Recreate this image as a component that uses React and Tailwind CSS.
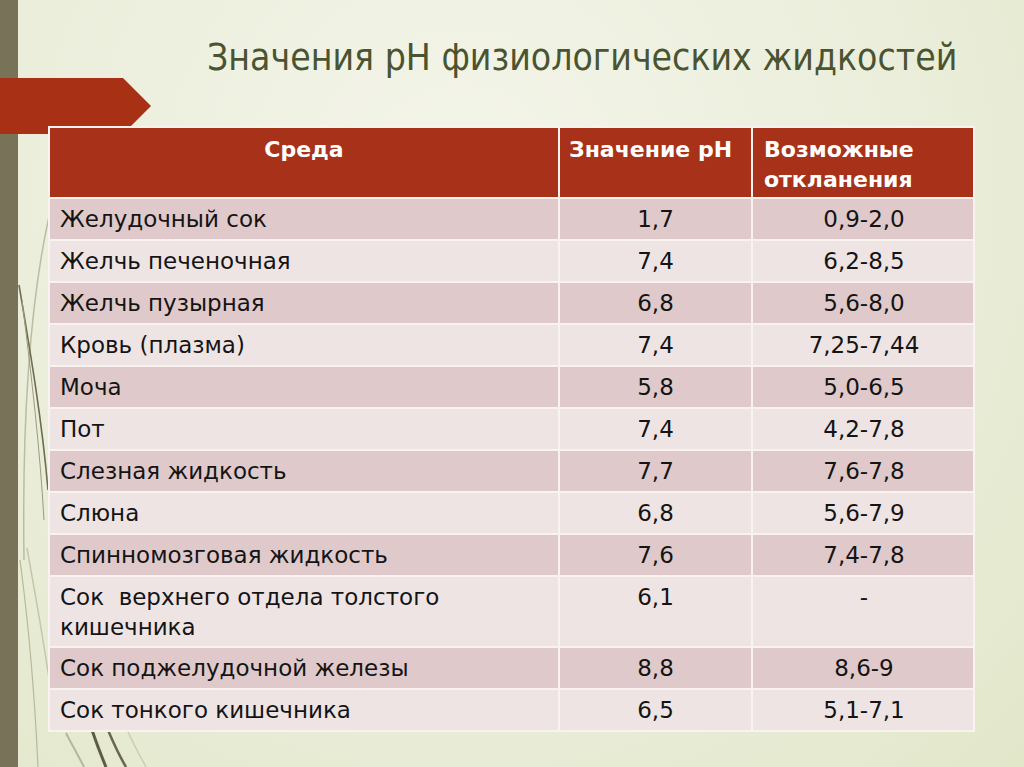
import React from "react";

const rows = [
  ["Желудочный сок", "1,7", "0,9-2,0"],
  ["Желчь печеночная", "7,4", "6,2-8,5"],
  ["Желчь пузырная", "6,8", "5,6-8,0"],
  ["Кровь (плазма)", "7,4", "7,25-7,44"],
  ["Моча", "5,8", "5,0-6,5"],
  ["Пот", "7,4", "4,2-7,8"],
  ["Слезная жидкость", "7,7", "7,6-7,8"],
  ["Слюна", "6,8", "5,6-7,9"],
  ["Спинномозговая жидкость", "7,6", "7,4-7,8"],
  ["Сок\u00a0 верхнего отдела толстого кишечника", "6,1", "-"],
  ["Сок поджелудочной железы", "8,8", "8,6-9"],
  ["Сок тонкого кишечника", "6,5", "5,1-7,1"],
];

const font = { fontFamily: '"DejaVu Sans", "Liberation Sans", sans-serif' };
const titleFont = { fontFamily: '"DejaVu Sans Condensed", "DejaVu Sans", sans-serif' };

function Grass() {
  return (
    <svg
      className="absolute left-0 top-0 z-0"
      width="1024"
      height="767"
      viewBox="0 0 1024 767"
      fill="none"
    >
      <path d="M50 212 C 30 300, 22 420, 24 560" stroke="#b9bea0" strokeWidth="1.5" />
      <path d="M19 285 C 30 350, 42 420, 48 490" stroke="#6f6c52" strokeWidth="1.6" />
      <path d="M22 300 C 32 380, 40 450, 44 520" stroke="#9a9a7c" strokeWidth="1" />
      <path d="M27 548 C 36 600, 44 640, 52 700" stroke="#c3c8ab" strokeWidth="1.5" />
      <path d="M20 560 C 28 620, 34 680, 38 767" stroke="#b5ba9b" strokeWidth="1.2" />
      <path d="M66 733 C 72 745, 78 755, 84 767" stroke="#b4b89a" strokeWidth="2" />
      <path d="M92 730 C 96 742, 101 755, 106 767" stroke="#5f5c45" strokeWidth="3" />
      <path d="M108 730 C 113 742, 119 755, 126 767" stroke="#6a6750" strokeWidth="2.5" />
      <path d="M128 732 C 134 745, 140 756, 146 767" stroke="#c9ceb2" strokeWidth="1.5" />
    </svg>
  );
}

export default function App() {
  return (
    <div
      className="relative w-[1024px] h-[767px] overflow-hidden flex bg-[radial-gradient(ellipse_at_45%_25%,#f4f5ea_0%,#ebeedb_55%,#e2e7ca_100%)]"
      style={font}
    >
      <Grass />
      <div className="relative z-10 w-[18px] shrink-0 bg-[#787259]" />
      <svg
        className="absolute left-0 top-0 z-20"
        width="160"
        height="140"
        viewBox="0 0 160 140"
      >
        <polygon points="0,78 123,78 151,106 123,134 0,134" fill="#a83015" />
      </svg>
      <div className="relative z-30 flex-1 flex flex-col">
        <h1
          className="mt-[36px] pl-[189px] text-[37px] leading-[44px] font-normal text-[#4a5431] whitespace-nowrap"
          style={titleFont}
        >
          Значения pH физиологических жидкостей
        </h1>
        <div className="mt-[46px] ml-[30px] w-[927px] p-[2px] bg-[#f8f3ef] grid grid-cols-[508px_191px_220px] gap-[2px]">
          <div className="bg-[#a83219] text-white font-bold text-[22px] leading-[30px] pt-[7px] pb-[2px] h-[69px] text-center">
            Среда
          </div>
          <div className="bg-[#a83219] text-white font-bold text-[22px] leading-[30px] pt-[7px] pb-[2px] px-[9px] h-[69px] whitespace-nowrap">
            Значение pH
          </div>
          <div className="bg-[#a83219] text-white font-bold text-[22px] leading-[30px] pt-[7px] pb-[2px] px-[11px] h-[69px]">
            Возможные откланения
          </div>
          {rows.map((r, i) => {
            const bg = i % 2 === 0 ? "bg-[#dfc9ca]" : "bg-[#efe4e4]";
            const tall = i === 9;
            return (
              <React.Fragment key={i}>
                <div
                  className={`${bg} ${tall ? "h-[69px]" : "h-[40px]"} px-[10px] pt-[5px] text-[23px] leading-[30px] text-[#141414]`}
                >
                  {r[0]}
                </div>
                <div
                  className={`${bg} ${tall ? "h-[69px]" : "h-[40px]"} pt-[5px] text-[23px] leading-[30px] text-[#141414] text-center`}
                >
                  {r[1]}
                </div>
                <div
                  className={`${bg} ${tall ? "h-[69px]" : "h-[40px]"} pt-[5px] pl-[2px] text-[23px] leading-[30px] text-[#141414] text-center`}
                >
                  {r[2]}
                </div>
              </React.Fragment>
            );
          })}
        </div>
      </div>
    </div>
  );
}
